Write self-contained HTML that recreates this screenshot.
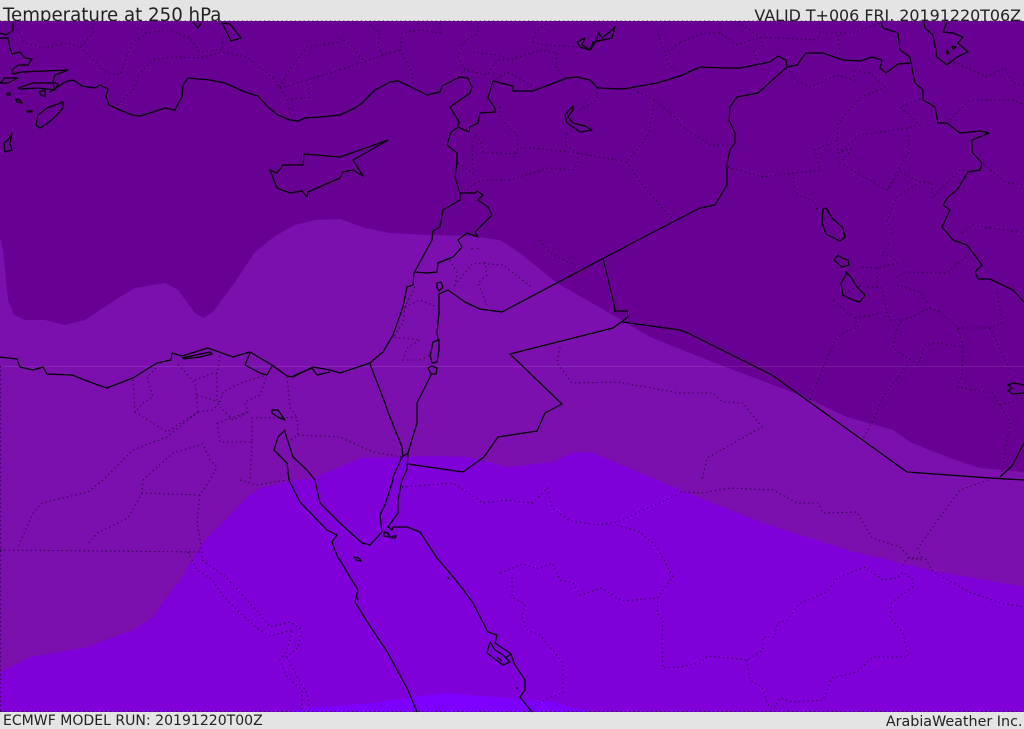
<!DOCTYPE html>
<html>
<head>
<meta charset="utf-8">
<title>Temperature at 250 hPa</title>
<style>
html,body{margin:0;padding:0;background:#e4e4e4;width:1024px;height:729px;overflow:hidden}
svg{display:block;position:absolute;left:0;top:0}
text{font-family:"DejaVu Sans","Liberation Sans",sans-serif;fill:#222}
.c{fill:none;stroke:#000;stroke-width:1.25;stroke-linejoin:round}
.d{fill:none;stroke:#1a0028;stroke-width:1.1;stroke-dasharray:1.2 3.2;opacity:.85}
</style>
</head>
<body>
<svg width="1024" height="729" viewBox="0 0 1024 729" xmlns="http://www.w3.org/2000/svg">
<rect width="1024" height="729" fill="#e4e4e4"/>
<text x="3" y="21" font-size="18.2">Temperature at 250 hPa</text>
<text x="1021" y="21" font-size="15.9" text-anchor="end">VALID T+006 FRI. 20191220T06Z</text>
<text x="3" y="725" font-size="14.05">ECMWF MODEL RUN: 20191220T00Z</text>
<text x="1022.500" y="726" font-size="14.3" text-anchor="end">ArabiaWeather Inc.</text>

<rect x="0" y="21" width="1024" height="691" fill="#7f00d8"/>
<path fill="#7b10ae" d="M0 21H1024V587L930 570 847 550 763 523 680 490 657 480 593 453 573 452 553 462 507 467 467 457 433 456 360 458 340 467 313 478 287 482 260 488 247 497 227 518 203 542 180 580 163 602 153 617 133 630 83 648 30 657 0 672Z"/>
<path fill="#680094" d="M0 21H1024V472L980 468 947 457 910 442 893 430 847 417 800 395 723 366 680 349 650 337 613 315 557 283 520 253 500 240 470 236 430 235 390 233 365 228 340 219 315 220 295 225 275 236 255 252 235 282 213 312 203 318 195 313 178 290 165 283 135 288 115 300 85 320 65 325 45 320 25 320 14 315 8 300 3 250 0 237Z"/>
<path fill="#7d00ff" d="M287 712L313 707 340 706 373 703 413 697 447 693 507 698 553 702 590 712Z"/>
<rect x="0" y="366" width="1024" height="1" fill="#fff" opacity=".1"/>

<g class="d">
<path d="M15 25L25 43 43 48 67 43 80 47 93 33 92 23"/>
<path d="M80 47L93 60 107 73 120 75 132 43 147 33 170 30 190 38 200 52 222 50 223 38"/>
<path d="M137 28L147 33"/>
<path d="M138 75L153 60 170 57 200 58 222 52 247 57 273 78 280 88 287 73 307 47 340 42"/>
<path d="M117 105L133 90 138 75"/>
<path d="M280 88L307 80 340 70M280 88L287 100 290 115M287 100L310 97 307 80"/>
<path d="M340 38L353 47 365 63M340 70L383 55 400 50 402 33 420 30 440 33 440 22"/>
<path d="M367 22L380 33 378 47 383 55"/>
<path d="M400 50L412 72 413 83"/>
<path d="M478 22V33L463 42 458 57 465 70 487 75 497 60 510 60 540 50M473 52L497 55 510 60"/>
<path d="M465 70L457 77"/>
<path d="M533 42L535 33 547 23M533 42L543 45 578 47"/>
<path d="M540 50L557 53 556 68 565 78"/>
<path d="M493 81L507 72 537 88"/>
<path d="M500 107V118L517 135 518 150 513 158M483 152L480 140 475 135 472 142 473 173 458 163"/>
<path d="M483 152L513 154 523 147 577 153 627 162 648 135 655 100 680 122"/>
<path d="M577 153L578 163 573 170 548 168 510 180 487 180 477 182 467 190"/>
<path d="M627 162L640 182 673 220"/>
<path d="M597 88V100L580 110"/>
<path d="M567 133L565 145 577 153"/>
<path d="M633 90L655 100"/>
<path d="M657 30L668 63 675 72M680 43L665 53"/>
<path d="M680 42L703 33 720 33 737 45 760 37 780 38 817 40 820 33 853 33 880 23"/>
<path d="M720 23V33M738 22L760 37"/>
<path d="M760 37L763 47 753 50 758 60"/>
<path d="M820 23V33M838 35L840 57"/>
<path d="M787 67L795 80 810 87 837 75 855 80 853 70 870 73 885 87 860 98 838 123 837 140 815 150 820 170 793 173 763 177 727 167"/>
<path d="M680 125L710 145 732 145"/>
<path d="M837 140L838 153 860 135 907 128 920 125 900 107 922 98"/>
<path d="M838 153L853 148 840 163 887 190 910 150 907 128"/>
<path d="M887 190L900 172 920 182 932 183 932 198 960 170 970 170"/>
<path d="M920 182L897 197 887 220 893 233"/>
<path d="M793 173L795 193 815 202 818 213"/>
<path d="M950 120L970 100 1013 100 1024 105"/>
<path d="M950 60L987 77 1005 68 1013 83 1024 85"/>
<path d="M980 162L1007 183 1024 185"/>
<path d="M962 233L973 225 1024 233"/>
<path d="M810 400L825 363 835 340 843 333 858 327 855 318 832 300 840 297 857 286"/>
<path d="M855 318L887 312 882 288 857 286"/>
<path d="M887 312L890 320 902 320 897 328 893 348 918 365 925 345 937 343 963 347 958 328 940 312 930 308 910 318 902 320"/>
<path d="M862 267L877 268 897 263 890 255 882 255 890 242M877 268V287"/>
<path d="M897 277L905 272 947 273 970 253"/>
<path d="M897 285L920 292 928 303"/>
<path d="M907 365L883 397 872 423 862 440"/>
<path d="M958 328L990 328 1002 323 997 290M990 328L1010 370"/>
<path d="M963 347L962 373 958 387 992 393 1010 422 1002 472"/>
<path d="M1000 405L1024 398"/>
<path d="M133 380L135 412 143 403 153 397 147 377 157 367"/>
<path d="M135 412L167 432 198 412 195 383 177 363"/>
<path d="M195 380L213 373 217 373 220 355"/>
<path d="M197 395L220 402 213 410 198 412"/>
<path d="M220 402L223 392 240 383 267 375 260 395 245 402 248 412 233 420 220 407"/>
<path d="M217 423L220 442H252V418H280L297 417 298 435 290 440"/>
<path d="M252 442L250 480"/>
<path d="M217 423L248 412"/>
<path d="M217 373V400"/>
<path d="M287 377L290 407 297 417"/>
<path d="M298 435L340 437 373 452 402 457"/>
<path d="M198 412L167 437 133 450 103 480 88 492 42 503 33 513 18 547"/>
<path d="M143 480L173 453 203 444 210 460 217 467 210 480 200 495 142 493 143 480"/>
<path d="M142 493L128 518 97 533 87 545"/>
<path d="M200 495L197 522 202 552V560L227 578 263 618 270 627 290 622 302 630 298 647 287 657 297 677 307 693 310 710"/>
<path d="M0 550L202 552"/>
<path d="M188 552L197 570 213 580 222 595 240 613 257 628 270 636 293 630 287 650 280 660 287 677 302 690V710"/>
<path d="M240 480L257 485 287 480"/>
<path d="M415 287L405 307 403 323 393 337 420 340 407 348 403 360H420L430 355"/>
<path d="M405 307L420 300 437 307"/>
<path d="M450 260L457 273 455 285 473 263 503 265 533 288"/>
<path d="M485 262L487 275 478 283 487 305"/>
<path d="M380 353L370 363"/>
<path d="M472 248V252M478 248V252"/>
<path d="M540 240L550 253 580 268"/>
<path d="M560 347L557 363 572 383 617 382 680 393 713 393 723 402 743 403 762 427 707 458 702 480"/>
<path d="M402 487L453 483 483 503 507 500 532 503 548 488 552 508 570 521 600 525 617 522 677 495"/>
<path d="M617 525L640 532 657 547 673 577 658 597 657 613 663 620 662 640 663 668 680 667 700 663 708 656 747 660 763 650 763 637 775 637 777 623 787 620 800 603 827 592 837 578 865 567 883 580 897 578 903 572 913 580V587L892 602 890 617 903 633 908 657H873L857 672 832 678 823 700 793 702 780 698 773 710"/>
<path d="M747 660L750 680 762 687 767 703 773 710"/>
<path d="M680 492L702 493 730 488 773 490 797 503H818L823 513 857 512 872 538 900 547 910 558H925L933 572 970 592 1000 603 1024 607"/>
<path d="M988 480L960 490 940 517 918 548 922 560 907 558 902 567"/>
<path d="M500 573L523 564 537 569 552 563 560 580 573 583 580 595 602 588 622 601 657 598"/>
<path d="M512 577V597L525 604 522 617 527 630 540 635 555 653 563 663V693L548 698 532 707"/>
<path d="M0 21H1024M0 711.500H1024M.5 366V711"/>
</g>

<g class="c">
<path d="M13 22V30L6 35 0 33M0 38H8L10 48 12 54 20 52 25 58 32 59 28 65H18L12 70 13 74 22 72 68 70 55 75 53 82 58 84 56 88 50 92 65 82 72 80 75 81 82 86 95 88 100 85 108 89 106 96 109 105 120 110 132 115 140 116 150 113 165 108 175 110 178 104 182 97 183 85 188 78 210 80 225 83 245 92 258 96 268 107 278 115 290 120 298 121 305 118 320 117 340 115 355 108 362 103 375 90 390 82 398 81 407 85 427 95 440 92 442 86 460 77 468 78 472 87 470 93 450 107 459 122 457 128 451 132 447 145 457 153 457 163 455 177 460 193 460 200 443 210 440 227 433 231 432 240 420 262 414 273 413 285 407 287 403 307 393 335 383 352 370 363 340 373 330 370 313 367 293 377 287 376 272 365 250 352 233 357 208 348 182 356 172 353 171 360 157 363 133 378 107 388 95 384 72 375 47 374 43 367 33 370 20 367 17 359 0 357"/>
<path d="M304 154L303 165H283L277 173 270 170 277 188 290 193 302 191 307 197 308 192 340 178 343 172 353 170 363 176 353 160 362 155 388 140 360 150 340 157Z"/>
<path d="M63 102L47 108 38 115 36 125 40 128 48 123 57 115 63 108Z"/>
<path d="M12 133L8 140 4 143 5 152 12 150 10 143Z"/>
<path d="M18 78H5L0 83H8Z"/>
<path d="M18 88L33 83H53L55 90 38 88 20 89Z"/>
<path d="M39 92L45 90V97L41 95ZM15 99L20 100 22 103 17 102ZM27 111H32V112H27ZM7 93H10V95H7Z"/>
<path d="M193 22L198 28 202 22M222 23L230 24 237 33 241 38 231 41 227 33Z"/>
<path d="M493 81L513 86V91H533L567 78 577 77 590 80 598 88 623 89 657 83 680 76 700 67 725 68 740 68 770 62 778 56 786 60 787 67 797 65 806 53 823 53 843 60 860 61 872 57 882 60 880 68 886 73 898 64 910 63"/>
<path d="M881 22L883 28 898 33 900 50 910 57 912 68 915 83 923 90V100L935 107 938 123 947 123 960 133 980 131 989 133 972 140V152L982 163 980 170 968 172 957 190 948 197 943 205 950 210 942 227 953 240 967 245 982 265 975 272 978 279H990L1013 290 1024 302"/>
<path d="M787 67L758 93 737 97 730 107 729 120 735 133V143L730 150 727 163V185L715 205 700 208 638 240 502 312 480 309 465 302 448 290 439 294V313L437 333 438 340"/>
<path d="M431 375L417 403V423L408 453"/>
<path d="M408 464L463 472 484 457 498 437 537 431 545 413 562 404 510 354 613 328 628 317 627 311H615L614 304 603 258"/>
<path d="M622 322L680 330 688 333 772 375 907 472 990 478 1024 480"/>
<path d="M1000 477L1012 466 1024 443"/>
<path d="M370 364L385 403 388 412 402 447 403 457"/>
<path d="M408 453L402 457 393 477 393 480 385 505 380 515 382 532 370 545 362 543 340 523 320 503 315 480 307 470 293 457 285 432 285 430 278 437 274 450 287 463 289 480 300 502 327 530 337 535 332 542 338 558 340 560 350 577 358 590 355 602 368 623 388 653 408 690 417 712"/>
<path d="M408 453L407 470 402 480 398 500V513L388 527 392 530 393 527 407 527 420 532 437 558 450 573 462 588 473 603 488 632 497 635 495 643 510 653 515 665 525 680V690L520 697 532 712"/>
<path d="M490 642L487 653 503 665 510 662 503 655 495 650Z"/>
<path d="M505 658L511 654 513 660M497 657L502 661"/>
<path d="M577 42L585 38 582 45 590 50 597 40 598 32 602 38 612 30 615 27 612 38 603 40 593 42 590 50 580 47Z"/>
<path d="M573 106L565 115 567 123 580 132 592 130 585 126 573 123 568 117 573 110Z"/>
<path d="M924 22L925 28 933 35 937 57 947 65 957 57 968 52 958 43 963 37 953 33 943 32 947 22"/>
<path d="M947 50L949 53 947 54ZM952 46L956 47 953 49Z"/>
<path d="M823 209L822 223 826 234 840 241 845 237 843 228 832 218 826 208Z"/>
<path d="M838 255L834 260 842 267 849 265 848 260 842 258Z"/>
<path d="M846 272V275L841 283 843 295 853 300 860 302 865 295 857 287 851 277Z"/>
<path d="M1024 385L1013 383 1008 385 1012 388 1008 391 1013 394 1024 393"/>
<path d="M431 352L433 342 439 340V350L437 362 432 363 430 355Z"/>
<path d="M428 368L432 366 437 368 436 374H431Z"/>
<path d="M437 283L441 282 443 287 439 291 437 288Z"/>
<path d="M460 193H475L477 191 483 195 478 200 488 207 492 215 480 227 475 232 478 237 467 233 458 240 462 247 453 257 438 263 437 272 427 273 415 272"/>
<path d="M493 81L488 98 495 108V112L480 113 478 123 470 127 469 132 458 127"/>
<path d="M182 358L210 352 212 354 200 357 183 359"/>
<path d="M250 353L245 365 260 373 267 375 272 366"/>
<path d="M293 376L312 368 317 375 330 372"/>
<path d="M272 410H278L285 420 278 417 272 413Z"/>
<path d="M384 532L388 533 390 537 384 536ZM392 536L396 536 395 538 392 538Z"/>
<path d="M354 557L359 558 361 561 356 560ZM448 577L449 579M356 595L358 600M516 688H518"/>
</g>
</svg>
</body>
</html>
